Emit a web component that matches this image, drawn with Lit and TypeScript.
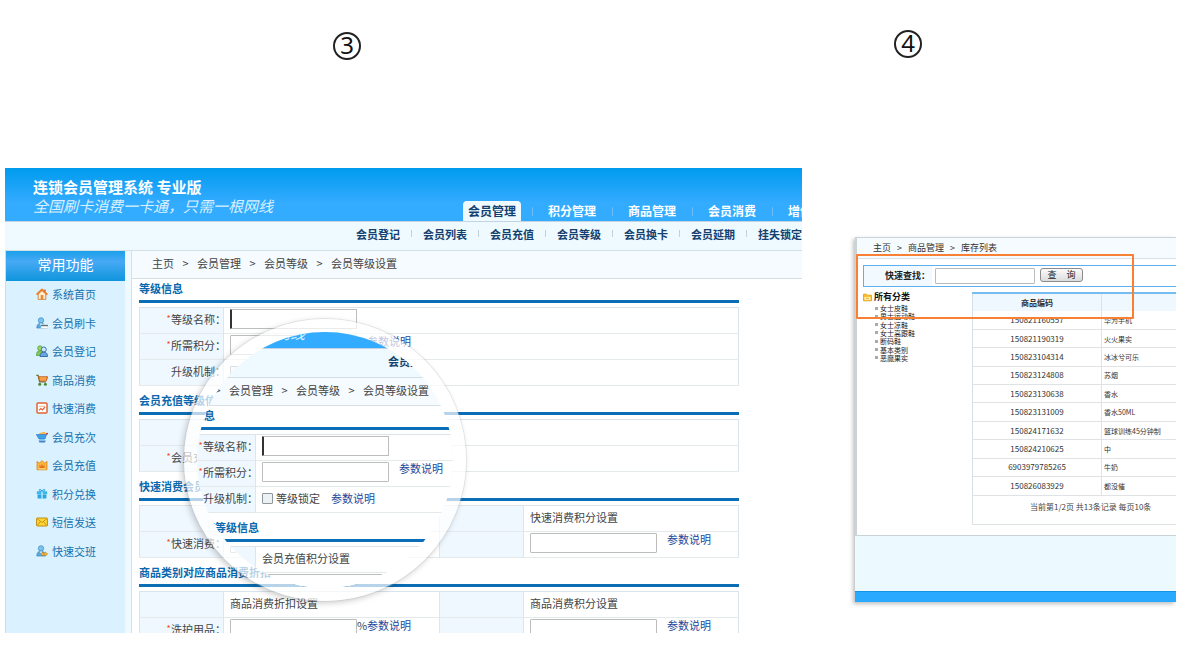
import { LitElement, html, css, svg, nothing } from "lit";
import { customElement, property } from "lit/decorators.js";

type Row = { label?: string; required?: boolean; title?: string; lock?: boolean; unit?: string; input?: boolean; rightTitle?: string; rightInput?: boolean };
type Section = { title: string; split?: boolean; rows: Row[] };

const TABS = ["会员管理", "积分管理", "商品管理", "会员消费", "增值服务"];
const SUBNAV = ["会员登记", "会员列表", "会员充值", "会员等级", "会员换卡", "会员延期", "挂失锁定"];

const SECTIONS: Section[] = [
  {
    title: "等级信息",
    rows: [
      { label: "等级名称", required: true, input: true },
      { label: "所需积分", required: true, input: true, unit: " " },
      { label: "升级机制", lock: true },
    ],
  },
  {
    title: "会员充值等级信息",
    rows: [{ title: "会员充值积分设置" }, { label: "会员充值", required: true, input: true }],
  },
  {
    title: "快速消费会员等级",
    split: true,
    rows: [
      { title: "快速消费折扣设置", rightTitle: "快速消费积分设置" },
      { label: "快速消费", required: true, input: true, rightInput: true },
    ],
  },
  {
    title: "商品类别对应商品消费折扣",
    split: true,
    rows: [
      { title: "商品消费折扣设置", rightTitle: "商品消费积分设置" },
      { label: "洗护用品", required: true, input: true, unit: "%", rightInput: true },
    ],
  },
];

const person = svg`<circle cx="5" cy="3.4" r="2.7" fill="#7cc4ee" stroke="#3b86bd" stroke-width=".7"/><path d="M.8 11c0-3.4 1.6-4.8 4.2-4.8S9.2 7.600 9.200 11z" fill="#56ade4" stroke="#3b86bd" stroke-width=".7"/><path d="M3.600 6.500 5 8.500l1.400-2z" fill="#e8f7ff"/>`;

const MENU = [
  {
    text: "系统首页",
    icon: svg`<path d="M2.200 6v5.400h7.600V6L6 2.600z" fill="#fff1cf" stroke="#c8722a" stroke-width=".8"/><path d="M.6 6.600 6 1.400l5.400 5.200" fill="none" stroke="#ee7b22" stroke-width="1.700" stroke-linejoin="round"/><path d="M9 1.500v2.200" stroke="#c8622a" stroke-width="1.300"/><rect x="4.700" y="7" width="2.600" height="4.400" fill="#e98b34"/>`,
  },
  { text: "会员刷卡", icon: svg`${person}<rect x="5" y="7.500" width="7" height="4" rx=".5" fill="#fff" stroke="#b9c5cd" stroke-width=".5"/><path d="M5 8.700h7" stroke="#455" stroke-width="1"/>` },
  {
    text: "会员登记",
    icon: svg`<circle cx="4" cy="3.200" r="2.400" fill="#9bd36b" stroke="#4d9b32" stroke-width=".7"/><path d="M.5 10.500C.5 7 1.500 5.800 4 5.800s3.500 1.200 3.500 4.700z" fill="#86c957" stroke="#4d9b32" stroke-width=".7"/><circle cx="7.800" cy="4.500" r="2.500" fill="#cfe7f8" stroke="#2c67a8" stroke-width=".9"/><path d="M4 11.500c0-3.200 1.400-4.300 3.800-4.300s3.700 1.100 3.700 4.300z" fill="#6ba7df" stroke="#2c67a8" stroke-width=".9"/>`,
  },
  {
    text: "商品消费",
    icon: svg`<path d="M.3 1.300h1.800l1.600 6.500h6.200" fill="none" stroke="#6b6f38" stroke-width="1.300"/><path d="M2.500 2.700h9.200l-1.400 4.300H3.600z" fill="#f28a2d" stroke="#bb5a18" stroke-width=".8"/><path d="M5 3v4M7 3v4M9 3v4" stroke="#ffd08a" stroke-width=".6"/><circle cx="3.700" cy="10.200" r="1.500" fill="#4e8a30"/><circle cx="9.400" cy="10.200" r="1.500" fill="#4e8a30"/>`,
  },
  {
    text: "快速消费",
    icon: svg`<rect x="1" y="1" width="10" height="10" rx="1" fill="#fff" stroke="#df6435" stroke-width="1.500"/><path d="M3.200 4.300h5.600" stroke="#efb598" stroke-width="1"/><path d="m3 8.300 1.800-1.800 1.600 1.400L9 5" fill="none" stroke="#df6435" stroke-width="1.200"/>`,
  },
  {
    text: "会员充次",
    icon: svg`<path d="M3.300 2 9 .8l1 3H3.300z" fill="#f2b34c"/><path d="M.3 3.500h10.200L9 8H3z" fill="#3ea0e8" stroke="#2273bb" stroke-width=".6"/><path d="M2.500 9.500h7.200L9 11.500H3.500z" fill="#4b80c4"/><path d="M4 8h4v1.700H4z" fill="#78c5f2"/><circle cx="11" cy="2.800" r="1" fill="#c9322e"/>`,
  },
  {
    text: "会员充值",
    icon: svg`<path d="M1 2.500 3.500 4 6 1.500 8.500 4 11 2.500v8.300H1z" fill="#f8b73c" stroke="#dd8522" stroke-width=".8"/><path d="M3.500 5.500 5 7.500 6 4.500l1 3 1.500-2v3.800h-5z" fill="#e76f24"/><path d="M2.500 9.900h7" stroke="#fff0a8" stroke-width=".8"/>`,
  },
  {
    text: "积分兑换",
    icon: svg`<rect x=".8" y="3.300" width="10.400" height="3" rx=".6" fill="#39b6ec"/><rect x="1.600" y="6.600" width="8.800" height="4" rx=".6" fill="#2ba4df"/><path d="M6 3v7.600" stroke="#c7f1ff" stroke-width="1.300"/><path d="M6 3C4.800.8 3 1 3.200 2.300 3.300 3 4.600 3.200 6 3c1.400.2 2.700 0 2.800-.7C9 1 7.200.8 6 3" fill="none" stroke="#279dd6" stroke-width=".9"/>`,
  },
  {
    text: "短信发送",
    icon: svg`<rect x=".6" y="2" width="10.800" height="8" rx=".7" fill="#ffd735" stroke="#c38a10" stroke-width="1"/><path d="m1.200 2.600 4.800 4 4.800-4M1.200 9.500 4.500 5.500M10.800 9.500 7.500 5.500" fill="none" stroke="#b98412" stroke-width=".8"/>`,
  },
  { text: "快速交班", icon: svg`${person}<path d="m4.800 9 2.300-2v1.200h2.300V7l2.300 2-2.300 2V9.900H7.100v1.200z" fill="#ffbe35" stroke="#c97c12" stroke-width=".6"/>` },
];

const GOODS = [
  ["150821160557", "华为手机"],
  ["150821190319", "火火果实"],
  ["150823104314", "冰冰兮可乐"],
  ["150823124808", "苏烟"],
  ["150823130638", "香水"],
  ["150823131009", "香水50ML"],
  ["150824171632", "篮球训练45分钟制"],
  ["150824210625", "中"],
  ["6903979785265", "牛奶"],
  ["150826083929", "都没催"],
];
const CATEGORIES = ["女士皮鞋", "男士运动鞋", "女士凉鞋", "女士高跟鞋", "断码鞋", "基本类别", "恶魔果实"];

const base = css`
  * { box-sizing: border-box; }
  :host { display: block; font-family: "Noto Sans CJK SC", "Noto Sans", sans-serif; }
  a { text-decoration: none; color: inherit; }
  ul, ol, h1, h2, p { margin: 0; padding: 0; list-style: none; font-size: inherit; }
  table { border-collapse: collapse; table-layout: fixed; width: 100%; }
  td, th { padding: 0; }
  input { font: inherit; border: 1px solid #bdbdbd; border-radius: 1px; background: #fff; padding: 0 2px; display: block; }
`;

@customElement("member-page")
class MemberPage extends LitElement {
  @property({ type: Boolean }) compact = false;

  static styles = [
    base,
    css`
      :host { font-size: 11px; line-height: 16px; color: #444; background: #eefaff; }
      .header { display: flex; height: 54px; background: linear-gradient(#009bee, #33abff 65%); border-bottom: 1px solid #c3d3e2; }
      .brand { flex: 0 0 430px; padding: 10px 0 0 28px; color: #fff; white-space: nowrap; }
      .brand h1 { font-size: 15px; line-height: 18px; }
      .slogan { font-size: 15px; line-height: 19px; font-style: italic; color: #d9f0ff; }
      .tabs { display: flex; align-items: flex-end; gap: 11px; padding-left: 28px; font-size: 12px; font-weight: bold; color: #fff; white-space: nowrap; }
      .tabs li { display: flex; align-items: center; gap: 10px; }
      .tabs li + li::before, .subnav li + li::before { content: ""; width: 1px; height: 9px; background: #68bffa; }
      .tabs a { padding: 0 5px; line-height: 20px; }
      .tabs .on { background: #eefaff; color: #14406f; border-radius: 4px 4px 0 0; }
      .subnav { display: flex; gap: 11px; height: 29px; padding-left: 351px; line-height: 24px; font-weight: bold; color: #14406f; white-space: nowrap; border-bottom: 1px solid #d3dfe4; }
      .subnav li { display: flex; align-items: center; gap: 11px; height: 23px; }
      .subnav li + li::before { background: #c2d0d8; height: 7px; }
      .body { display: grid; grid-template-columns: 120px minmax(0, 1fr); gap: 6px; }
      .side { background: #daf1ff; border-left: 1px solid #c4dfee; min-height: 386px; }
      .side h2 { background: linear-gradient(#1ba0ea, #47a9f5 35%, #0f95dc); color: #fff; font-weight: 400; font-size: 14px; line-height: 26px; height: 30px; text-align: center; }
      .menu { display: grid; grid-auto-rows: 1fr; height: 285px; color: #1771b0; }
      .menu a { display: flex; align-items: center; gap: 4px; height: 100%; padding: 0 0 2px 30px; }
      .menu svg { width: 12px; height: 12px; flex: none; }
      .main { background: #fff; border-left: 1px solid #d3e0e8; }
      .crumbs { display: flex; gap: 8px; align-items: center; height: 28px; padding: 0 0 3px 20px; background: #f5fbff; border-bottom: 1px solid #d6e0e4; white-space: nowrap; }
      .crumbs .sep { width: 7px; text-align: center; }
      .section { margin: 0 63px 5px 7px; }
      .section h2 { height: 21px; line-height: 18px; color: #0a68ae; white-space: nowrap; }
      .rule { height: 3px; background: #0a6db5; margin-bottom: 4px; }
      .rows { border: 1px solid #dbe4ea; }
      tr { height: 26px; border-bottom: 1px solid #e4e9ec; vertical-align: top; }
      .name { width: 84px; background: #f0f8ff; border-right: 1px solid #d9e8f0; font-weight: 400; }
      .half { width: 216px; border-right: 1px solid #d9e8f0; }
      .name label { display: flex; padding-left: 26px; white-space: nowrap; width: 84px; line-height: 22px; }
      .star { flex: 0 0 5px; color: #f04a24; font-size: 9px; }
      .field { display: flex; align-items: center; height: 22px; padding-left: 6px; }
      .field input[type="text"] { width: 127px; height: 20px; }
      .field input.focus { border-left: 2px solid #333; }
      .field input[type="checkbox"] { appearance: none; width: 11px; height: 11px; margin: 0 3px 0 0; border: 1px solid #8d979e; background: #eef1f3; padding: 0; }
      .unit { width: 10px; align-self: flex-start; line-height: 14px; }
      .help { color: #1b489c; align-self: flex-start; line-height: 14px; }
      .lock { margin-right: 11px; }
      .mid { align-self: center; line-height: 16px; }
    `,
  ];

  private help(mid = false) {
    return html`<a class="help ${mid ? "mid" : ""}" href="#help">参数说明</a>`;
  }

  private row(r: Row, split: boolean, id: string) {
    return html`<tr>
      <th class="name" scope="row">
        ${r.label
          ? html`<label for=${id}><span class="star">${r.required ? "*" : ""}</span>${r.label}：</label>`
          : nothing}
      </th>
      <td class=${split ? "half" : ""}>
        <div class="field">
          ${r.title ?? nothing}
          ${r.input ? html`<input id=${id} type="text" class=${r.label === "等级名称" ? "focus" : ""} />` : nothing}
          ${r.unit ? html`<span class="unit">${r.unit}</span>${this.help()}` : nothing}
          ${r.lock ? html`<input id=${id} type="checkbox" /><label class="lock" for=${id}>等级锁定</label>${this.help(true)}` : nothing}
        </div>
      </td>
      ${split
        ? html`<td class="name"></td>
            <td>
              <div class="field">
                ${r.rightTitle ?? nothing}
                ${r.rightInput ? html`<input type="text" aria-label="积分设置" /><span class="unit"></span>${this.help()}` : nothing}
              </div>
            </td>`
        : nothing}
    </tr>`;
  }

  render() {
    const sections = this.compact ? SECTIONS.slice(0, 2) : SECTIONS;
    return html`
      <div class="header">
        <div class="brand">
          <h1>连锁会员管理系统 专业版</h1>
          <p class="slogan">全国刷卡消费一卡通，只需一根网线</p>
        </div>
        ${this.compact
          ? nothing
          : html`<ul class="tabs">
              ${TABS.map((t, i) => html`<li><a href="#tab" class=${i === 0 ? "on" : ""}>${t}</a></li>`)}
            </ul>`}
      </div>
      <ul class="subnav">
        ${(this.compact ? SUBNAV.slice(0, 1) : SUBNAV).map((t) => html`<li><a href="#sub">${t}</a></li>`)}
      </ul>
      <div class="body">
        <div class="side">
          ${this.compact
            ? nothing
            : html`<h2>常用功能</h2>
                <ul class="menu">
                  ${MENU.map((m) => html`<li><a href="#menu"><svg viewBox="0 0 12 12" aria-hidden="true">${m.icon}</svg>${m.text}</a></li>`)}
                </ul>`}
        </div>
        <div class="main">
          <div class="crumbs">
            <span>主页</span><span class="sep">&gt;</span><span>会员管理</span><span class="sep">&gt;</span><span>会员等级</span><span class="sep">&gt;</span><span>会员等级设置</span>
          </div>
          ${sections.map(
            (s, i) => html`<div class="section">
              <h2>${s.title}</h2>
              <div class="rule"></div>
              <table class="rows">
                <tbody>${s.rows.map((r, j) => this.row(r, !!s.split, `f${i}-${j}`))}</tbody>
              </table>
            </div>`,
          )}
        </div>
      </div>
    `;
  }
}

@customElement("stock-page")
class StockPage extends LitElement {
  static styles = [
    base,
    css`
      :host { font-size: 9px; line-height: 12px; color: #333; background: #ecf9ff; position: relative; box-shadow: -2px 2px 4px rgba(0, 0, 0, 0.25); clip-path: inset(-4px 0 -10px -10px); }
      .panel { background: #fff; border: solid #c9d3da; border-width: 1px 0 1px 2px; padding-bottom: 10px; }
      .crumbs { display: flex; align-items: center; gap: 6px; height: 21px; padding: 0 0 1px 16px; background: #f5fbff; border-bottom: 1px solid #d9e1e6; }
      .crumbs .sep { width: 5px; text-align: center; }
      .search { display: flex; align-items: center; height: 22px; margin: 6px 0 0 6px; border: solid #5db0ee; border-width: 1px 0 1px 1px; }
      .search label { background: #f2f9ff; flex: 0 0 68px; height: 20px; line-height: 19px; padding-left: 21px; font-weight: bold; color: #222; white-space: nowrap; }
      .search input { width: 100px; height: 16px; margin: 0 5px 0 3px; }
      .search button { display: flex; justify-content: center; gap: 10px; align-self: flex-start; margin-top: 2px; font: inherit; line-height: 11px; width: 43px; height: 14px; padding: 0; border: 1px solid #8b8b8b; border-radius: 3px; background: linear-gradient(#fafafa, #dcdcdc); color: #222; }
      .cols { display: grid; grid-template-columns: 109px minmax(0, 1fr); padding: 5px 0 0 6px; }
      .root { display: flex; align-items: center; gap: 2px; font-weight: bold; color: #111; line-height: 10px; height: 12px; padding-bottom: 2px; }
      .root svg { width: 9px; height: 9px; }
      .tree ul { display: grid; grid-auto-rows: 1fr; height: 58px; font-size: 7px; line-height: 8px; padding-left: 12px; }
      .tree li { display: flex; align-items: center; gap: 2px; color: #222; }
      .tree li::before { content: ""; width: 3px; height: 3px; background: #aaa; }
      table { font-size: 8px; border-left: 1px solid #d6dfe5; }
      thead th { height: 18px; background: #f0f8ff; border-top: 2px solid #74bdf0; line-height: 12px; }
      thead th + th, td + td { border-left: 1px solid #e0e3e6; }
      .code { width: 129px; text-align: center; }
      .goods { height: 184px; }
      tbody tr { border-bottom: 1px solid #e0e3e6; line-height: 10px; height: 18px; }
      tbody .item { font-size: 7px; padding-left: 2px; text-align: left; }
      .pager { font-size: 8px; height: 29px; line-height: 21px; padding-left: 57px; border: solid #dde2e5; border-width: 0 0 1px 1px; color: #444; white-space: nowrap; }
      .foot { margin-top: 55px; height: 11px; background: #29a9ff; border-top: 1px solid #1592e6; }
      .focus { position: absolute; left: 1px; top: 17px; width: 278px; height: 65px; border: 2px solid #f97f33; border-radius: 1px; pointer-events: none; }
    `,
  ];

  render() {
    return html`
      <div class="panel">
        <div class="crumbs">
          <span>主页</span><span class="sep">&gt;</span><span>商品管理</span><span class="sep">&gt;</span><span>库存列表</span>
        </div>
        <div class="search">
          <label for="q">快速查找：</label>
          <input id="q" type="text" />
          <button type="button"><span>查</span><span>询</span></button>
        </div>
        <div class="cols">
          <div class="tree">
            <div class="root">
              <svg viewBox="0 0 9 9" aria-hidden="true"><path d="M.5 1.200h3l.8 1h4.200v5.600h-8z" fill="#ffc02e" stroke="#e09812" stroke-width=".8" /><path d="M1.500 4h6v3h-6z" fill="#fff0b0" /><path d="M3 5.300h3" stroke="#e09812" stroke-width=".8" /></svg>
              所有分类
            </div>
            <ul>${CATEGORIES.map((c) => html`<li>${c}</li>`)}</ul>
          </div>
          <div>
            <table>
              <thead>
                <tr><th class="code">商品编码</th><th></th></tr>
              </thead>
              <tbody class="goods">
                ${GOODS.map(([code, name]) => html`<tr><td class="code">${code}</td><td class="item">${name}</td></tr>`)}
              </tbody>
            </table>
            <div class="pager">当前第1/2页 共13条记录 每页10条</div>
          </div>
        </div>
      </div>
      <div class="foot"></div>
      <div class="focus"></div>
    `;
  }
}

@customElement("app-root")
class AppRoot extends LitElement {
  static styles = [
    base,
    css`
      :host { background: #fff; }
      .board { display: flex; align-items: flex-start; gap: 53px; padding: 0 24px 19px 5px; }
      .left { flex: 797 1 0; min-width: 0; }
      .right { flex: 321 1 0; min-width: 0; }
      .mark { display: flex; }
      .left .mark { height: 168px; padding: 32px 0 0 328px; }
      .right .mark { height: 237px; padding: 30px 0 0 39px; }
      .num { width: 28px; height: 28px; border: 2px solid #222; border-radius: 50%; font: 24px/22px "Noto Sans", "Open Sans", sans-serif; color: #111; text-align: center; }
      .shot { position: relative; height: 465px; overflow: hidden; }
      .lens { position: absolute; left: 179px; top: 151px; width: 282px; height: 282px; border-radius: 50%; border: 13px solid rgba(255, 255, 255, 0.7); box-shadow: 0 0 0 1px rgba(190, 198, 204, 0.35), -2px 2px 6px rgba(0, 0, 0, 0.22); }
      .glass { position: relative; width: 100%; height: 100%; border-radius: 50%; overflow: hidden; background: #fff; }
      .zoomed { position: absolute; left: -160px; top: -37px; width: 797px; }
    `,
  ];

  render() {
    return html`
      <div class="board">
        <div class="left">
          <div class="mark"><span class="num">3</span></div>
          <div class="shot">
            <member-page></member-page>
            <div class="lens">
              <div class="glass"><member-page class="zoomed" compact></member-page></div>
            </div>
          </div>
        </div>
        <div class="right">
          <div class="mark"><span class="num">4</span></div>
          <stock-page></stock-page>
        </div>
      </div>
    `;
  }
}
